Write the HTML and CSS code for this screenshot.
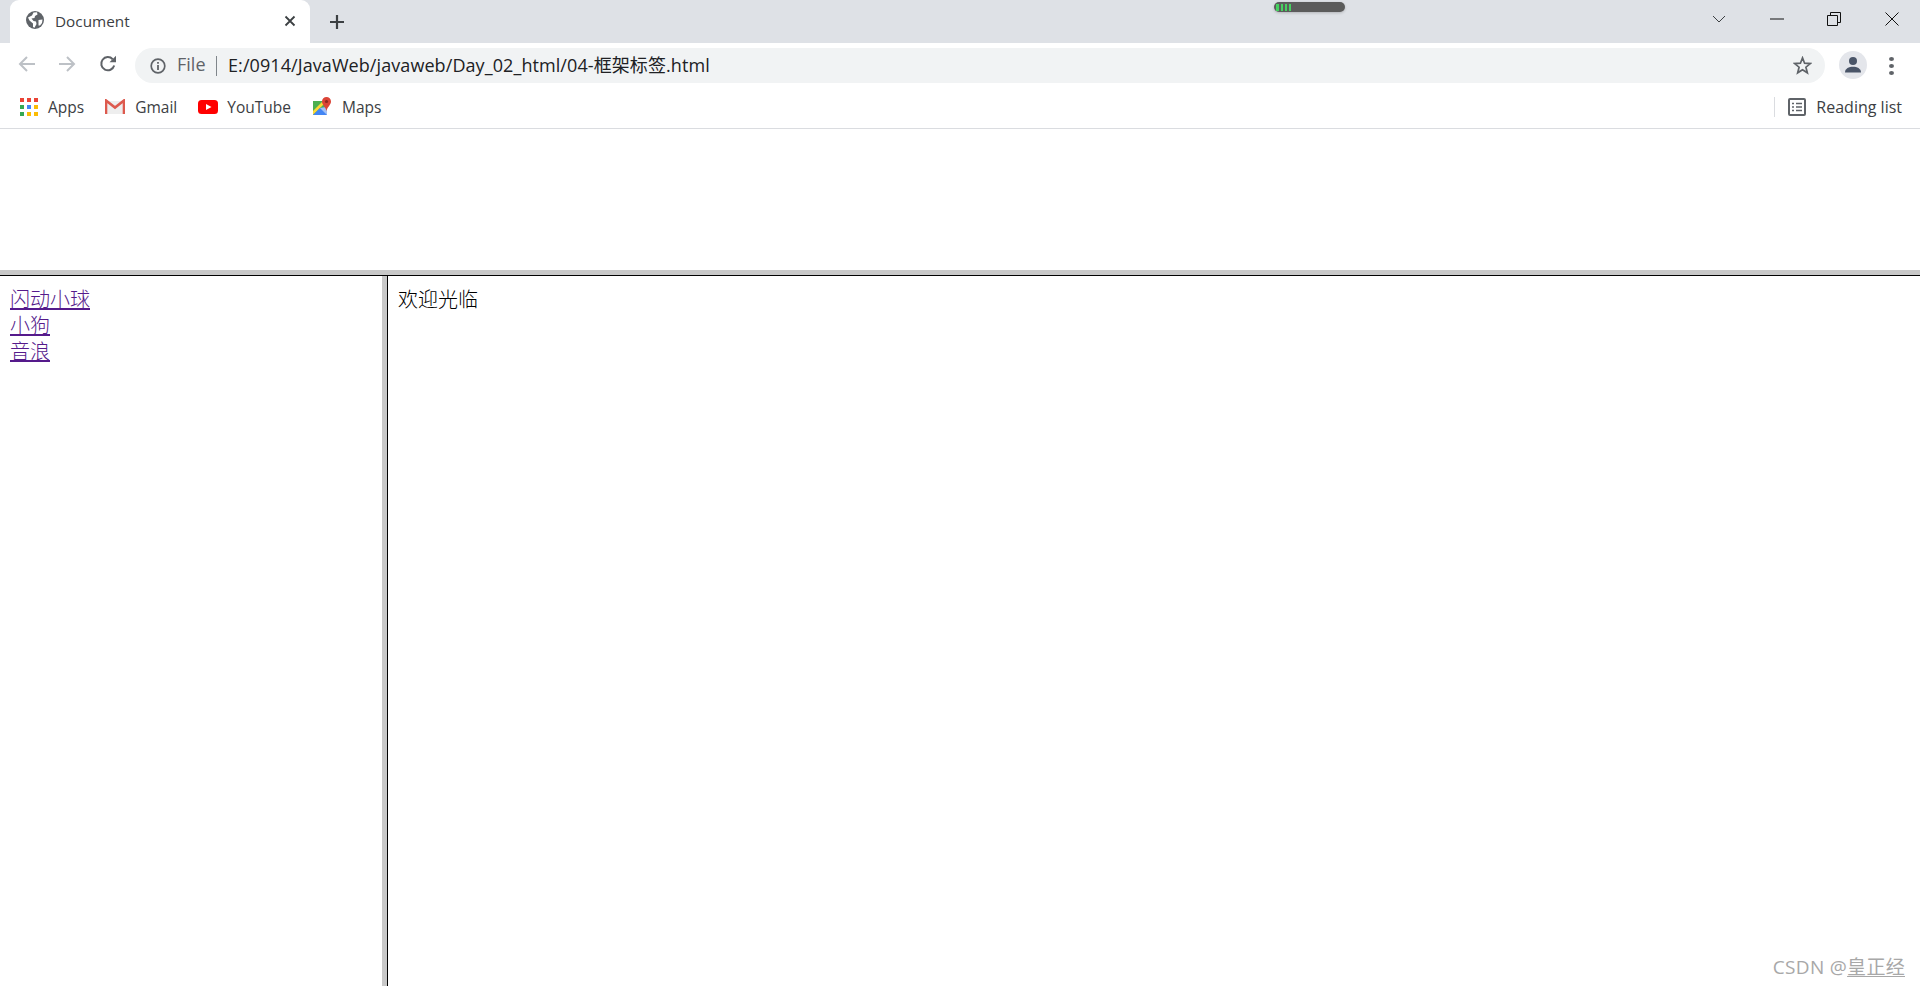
FILE: index.html
```html
<!DOCTYPE html>
<html lang="zh">
<head>
<meta charset="utf-8">
<title>Document</title>
<link rel="stylesheet" href="styles.css">
</head>
<body>
<div class="tabstrip">
  <div class="tab">
    <svg class="globe" viewBox="0 0 18 18" width="18" height="18"><circle cx="9" cy="9" r="9" fill="#5f6368"/><path d="M2 6.5 6 4.5 7.5 1.5 11 1.2 11.5 3.5 9 5 8.5 7 5.5 7.5 7.5 10 10 10.5 10.5 13 8.5 16.8 7 16 7 12.5 3.5 9.5Z" fill="#fff"/><path d="M12.5 9 16.5 8.5 16 12 14 14.5 12.5 14.5Z" fill="#fff"/></svg>
    <span class="tab-title">Document</span>
    <svg class="tab-close" viewBox="0 0 12 12" width="12" height="12"><path d="M1.5 1.5 10.5 10.5M10.5 1.5 1.5 10.5" stroke="#3c4043" stroke-width="1.8" fill="none"/></svg>
  </div>
  <svg class="newtab" viewBox="0 0 16 16" width="16" height="16"><path d="M8 1V15M1 8H15" stroke="#3c4043" stroke-width="2.2" fill="none"/></svg>
  <div class="battery"><i class="b1"></i><i class="b2"></i><i class="b3"></i><i class="b4"></i></div>
  <div class="winctl">
    <svg viewBox="0 0 14 8" width="14" height="8" class="w-chev"><path d="M1 1 7 7 13 1" stroke="#3c4043" stroke-width="1" fill="none"/></svg>
    <svg viewBox="0 0 14 2" width="14" height="2" class="w-min"><path d="M0 1H14" stroke="#111" stroke-width="1"/></svg>
    <svg viewBox="0 0 14 14" width="14" height="14" class="w-max"><path d="M.5 3.5H10.5V13.5H.5ZM3.5 3.5V.5H13.5V10.5H10.5" stroke="#111" stroke-width="1" fill="none"/></svg>
    <svg viewBox="0 0 14 14" width="14" height="14" class="w-close"><path d="M.5 .5 13.5 13.5M13.5 .5 .5 13.5" stroke="#111" stroke-width="1" fill="none"/></svg>
  </div>
</div>
<div class="toolbar">
  <svg class="nav nav-back" viewBox="0 0 18 18" width="18" height="18"><path d="M17 9H2M9 2 2 9 9 16" stroke="#bdc1c6" stroke-width="2" fill="none"/></svg>
  <svg class="nav nav-fwd" viewBox="0 0 18 18" width="18" height="18"><path d="M1 9H16M9 2 16 9 9 16" stroke="#bdc1c6" stroke-width="2" fill="none"/></svg>
  <svg class="nav nav-reload" viewBox="0 0 18 18" width="18" height="18"><path d="M15.2 10.5A6.6 6.6 0 1 1 13.7 4.2" stroke="#5f6368" stroke-width="2" fill="none"/><path d="M10.5 7.2H17V.8Z" fill="#5f6368"/></svg>
  <div class="omnibox">
    <svg class="info" viewBox="0 0 16 16" width="16" height="16"><circle cx="8" cy="8" r="6.8" stroke="#5f6368" stroke-width="1.7" fill="none"/><path d="M8 7V12M8 4V5.8" stroke="#5f6368" stroke-width="1.8"/></svg>
    <span class="scheme">File</span><span class="sep"></span>
    <span class="url">E:/0914/JavaWeb/javaweb/Day_02_html/04-框架标签.html</span>
    <svg class="star" viewBox="0 0 20 20" width="19" height="19"><path d="M10 2 12.2 7.6 18.2 8 13.6 11.8 15.1 17.7 10 14.5 4.9 17.7 6.4 11.8 1.8 8 7.8 7.6Z" stroke="#5f6368" stroke-width="1.8" fill="none"/></svg>
  </div>
  <div class="avatar"><svg viewBox="0 0 18 18" width="18" height="18"><circle cx="9" cy="5" r="4" fill="#4a5568"/><path d="M1 16.5C1 12.5 5 10.8 9 10.8S17 12.5 17 16.5Z" fill="#4a5568"/></svg></div>
  <div class="kebab"><i></i><i></i><i></i></div>
</div>
<div class="bookmarks">
  <div class="bm bm-apps">
    <div class="apps-grid"><i class="r"></i><i class="r"></i><i class="r"></i><i class="g"></i><i class="b"></i><i class="y"></i><i class="g"></i><i class="y"></i><i class="y"></i></div>
    <span>Apps</span>
  </div>
  <div class="bm bm-gmail">
    <svg viewBox="0 0 20 16" width="20" height="16"><path d="M1 2H19V15H1Z" fill="#eee"/><path d="M1 15V1.5L10 8.5 19 1.5V15" stroke="#dd5a4e" stroke-width="2.6" fill="none"/></svg>
    <span>Gmail</span>
  </div>
  <div class="bm bm-yt">
    <svg viewBox="0 0 20 14" width="20" height="14"><rect width="20" height="14" rx="3.5" fill="#f00"/><path d="M8 4 13.5 7 8 10Z" fill="#fff"/></svg>
    <span>YouTube</span>
  </div>
  <div class="bm bm-maps">
    <svg viewBox="0 0 20 20" width="20" height="20"><path d="M1 4H15V18H1Z" fill="#4caf50"/><path d="M1 18 15 4H11L1 14Z" fill="#fdd835"/><path d="M1 18H15V10L8 11Z" fill="#4285f4"/><path d="M8 11 15 18V10Z" fill="#a3c2f5"/><path d="M14.5 0A4.5 4.5 0 0 1 19 4.5C19 8 15.5 9.5 14.5 14 13.5 9.5 10 8 10 4.5A4.5 4.5 0 0 1 14.5 0Z" fill="#db4437"/><circle cx="14.5" cy="4.5" r="1.6" fill="#8c2a20"/></svg>
    <span>Maps</span>
  </div>
  <div class="reading">
    <svg viewBox="0 0 18 18" width="18" height="18"><rect x="1" y="1" width="16" height="16" rx="1" stroke="#5f6368" stroke-width="2" fill="none"/><path d="M4 5.5H6M8 5.5H14M4 9H6M8 9H14M4 12.5H6M8 12.5H14" stroke="#5f6368" stroke-width="1.4"/></svg>
    <span>Reading list</span>
  </div>
</div>
<div class="page">
  <div class="frame-top"></div>
  <div class="frame-hsplit"></div>
  <div class="frame-row">
    <div class="frame-left">
      <a href="#">闪动小球</a><br>
      <a href="#">小狗</a><br>
      <a href="#">音浪</a>
    </div>
    <div class="frame-vsplit"></div>
    <div class="frame-main">欢迎光临</div>
  </div>
  <div class="watermark">CSDN @<u>皇正经</u></div>
</div>
</body>
</html>
```
FILE: styles.css
```css
html, body { margin: 0; padding: 0; height: 986px; overflow: hidden; background: #fff; }
body { display: flex; flex-direction: column; font-family: "Open Sans", "Noto Sans CJK SC", sans-serif; }
svg { display: block; flex: none; }

.tabstrip { height: 43px; flex: none; background: #dee1e6; display: flex; align-items: flex-start; position: relative; }
.tab { width: 300px; height: 43px; margin-left: 10px; background: #fff; border-radius: 9px 9px 0 0; display: flex; align-items: center; padding-left: 16px; box-sizing: border-box; }
.globe { margin-top: -4px; }
.tab-title { margin-left: 11px; font-size: 15.3px; color: #3c4043; margin-top: -1px; }
.tab-close { margin-left: auto; margin-right: 14px; margin-top: -1px; }
.newtab { margin: 14px 0 0 19px; }
.battery { position: absolute; left: 1274px; top: 2px; width: 71px; height: 10px; background: #5b5b5b; border-radius: 5px; box-shadow: 0 1px 3px rgba(0,0,0,.2); display: flex; gap: 2px; padding: 2px 0 1px 2px; box-sizing: border-box; }
.battery i { display: block; background: #46d160; width: 2px; }
.battery .b1 { width: 3px; }
.winctl { margin-left: auto; height: 43px; display: flex; align-items: flex-start; }
.w-chev { margin: 15px 0 0 0; }
.w-min { margin: 18px 0 0 44px; }
.w-max { margin: 12px 0 0 43px; }
.w-close { margin: 12px 21px 0 44px; }

.toolbar { height: 45px; flex: none; background: #fff; display: flex; align-items: flex-start; }
.nav { margin-top: 12px; }
.nav-back { margin-left: 18px; }
.nav-fwd { margin-left: 22px; }
.nav-reload { margin-left: 23px; }
.omnibox { width: 1690px; height: 35px; margin: 5px 0 0 18px; background: #f1f3f4; border-radius: 18px; display: flex; align-items: center; padding-left: 15px; box-sizing: border-box; }
.scheme { margin-left: 11px; font-size: 18px; color: #5f6368; margin-top: -3px; }
.sep { width: 1.5px; height: 20px; background: #80868b; margin: 0 11px 0 10px; }
.url { font-size: 18px; color: #202124; margin-top: -3px; letter-spacing: .08px; }
.star { margin-left: auto; margin-right: 13px; }
.avatar { width: 28px; height: 28px; border-radius: 50%; background: #e4e6eb; margin: 8px 0 0 14px; display: flex; align-items: center; justify-content: center; }
.kebab { margin: 14px 0 0 22px; display: flex; flex-direction: column; gap: 3px; }
.kebab i { display: block; width: 5px; height: 4px; border-radius: 50%; background: #5f6368; }

.bookmarks { height: 37px; padding-bottom: 3px; flex: none; background: #fff; border-bottom: 1px solid #dadce0; display: flex; align-items: center; font-size: 15.5px; color: #3c4043; }
.bm { display: flex; align-items: center; }
.bm-apps { margin-left: 20px; }
.bm-apps span { margin-left: 10px; }
.apps-grid { display: grid; grid-template-columns: repeat(3, 4px); grid-auto-rows: 4px; gap: 3px; width: 18px; height: 18px; }
.apps-grid i { display: block; }
.apps-grid .r { background: #ea4335; }
.apps-grid .g { background: #34a853; }
.apps-grid .b { background: #4285f4; }
.apps-grid .y { background: #fbbc04; }
.bm-gmail { margin-left: 21px; }
.bm-gmail span { margin-left: 10px; }
.bm-yt { margin-left: 21px; }
.bm-yt span { margin-left: 9px; }
.bm-maps { margin-left: 21px; }
.bm-maps span { margin-left: 10px; }
.reading { margin-left: auto; height: 20px; border-left: 1px solid #dadce0; padding-left: 13px; margin-right: 18px; display: flex; align-items: center; font-size: 16px; }
.reading span { margin-left: 10px; }

.page { flex: 1; display: flex; flex-direction: column; min-height: 0; position: relative; background: #fff; }
.frame-top { height: 141px; flex: none; }
.frame-hsplit { height: 5px; flex: none; background: #c8c8c8; border-bottom: 1px solid #000; box-sizing: content-box; }
.frame-row { flex: 1; display: flex; min-height: 0; }
.frame-left { width: 382px; flex: none; box-sizing: border-box; padding: 10px 0 0 10px; }
.frame-vsplit { width: 5px; flex: none; background: #c8c8c8; border-right: 1px solid #000; }
.frame-main { flex: 1; padding: 10px 0 0 10px; }
.frame-left, .frame-main { font-family: "Noto Sans CJK SC", sans-serif; font-size: 20px; line-height: 26px; color: #000; font-weight: 300; }
.frame-left a { color: #551a8b; text-decoration: underline; }
.watermark { position: absolute; right: 15px; bottom: 7px; font-size: 19px; line-height: 24px; color: #a8a8a8; letter-spacing: .3px; }
.watermark u { text-underline-offset: 2px; }
```
